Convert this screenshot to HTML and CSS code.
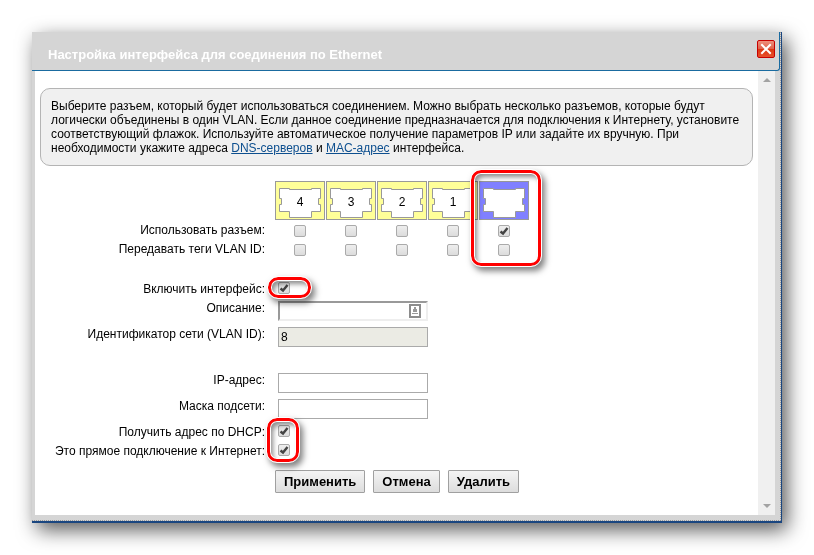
FILE: index.html
```html
<!DOCTYPE html>
<html lang="ru">
<head>
  <meta charset="UTF-8">
  <meta name="viewport" content="width=device-width, initial-scale=1.0">
  <title>Настройка интерфейса</title>
  <link rel="stylesheet" href="styles.css">
</head>
<body>
  <!-- port outline, shared by all sockets -->
  <svg class="defs" aria-hidden="true">
    <symbol id="socket" viewBox="0 0 50 39">
      <path d="M4.500 7.500H14.500V8.500H36.500V7.500H45.500V17.500H43.500V23.500H45.500V30.500H36.500V36.500H14.500V30.500H4.500V23.500H6.500V17.500H4.500Z" fill="#fff" stroke="#999"/>
    </symbol>
  </svg>

  <main class="dialog">
    <div class="frame">
      <header class="title-bar">
        <h1>Настройка интерфейса для соединения по Ethernet</h1>
        <button type="button" class="close" aria-label="Закрыть">
          <svg viewBox="0 0 16 16" width="16" height="16"><path d="M4 4L12 12M12 4L4 12" stroke="#fff" stroke-width="2" stroke-linecap="square"/></svg>
        </button>
      </header>

      <div class="body">
        <div class="content">
          <p class="info">Выберите разъем, который будет использоваться соединением. Можно выбрать несколько разъемов, которые будут логически объединены в один VLAN. Если данное соединение предназначается для подключения к Интернету, установите соответствующий флажок. Используйте автоматическое получение параметров IP или задайте их вручную. При необходимости укажите адреса <a href="#dns">DNS-серверов</a> и <a href="#mac">MAC-адрес</a> интерфейса.</p>

          <form>
            <div class="ports">
              <div class="port-labels">
                <span id="use-label">Использовать разъем:</span>
                <span id="tag-label">Передавать теги VLAN ID:</span>
              </div>
              <div class="port">
                <div class="socket"><svg><use href="#socket"/></svg><span>4</span></div>
                <input type="checkbox" aria-labelledby="use-label">
                <input type="checkbox" aria-labelledby="tag-label">
              </div>
              <div class="port">
                <div class="socket"><svg><use href="#socket"/></svg><span>3</span></div>
                <input type="checkbox" aria-labelledby="use-label">
                <input type="checkbox" aria-labelledby="tag-label">
              </div>
              <div class="port">
                <div class="socket"><svg><use href="#socket"/></svg><span>2</span></div>
                <input type="checkbox" aria-labelledby="use-label">
                <input type="checkbox" aria-labelledby="tag-label">
              </div>
              <div class="port">
                <div class="socket"><svg><use href="#socket"/></svg><span>1</span></div>
                <input type="checkbox" aria-labelledby="use-label">
                <input type="checkbox" aria-labelledby="tag-label">
              </div>
              <div class="port wan">
                <div class="socket"><svg><use href="#socket"/></svg></div>
                <input type="checkbox" aria-labelledby="use-label" checked>
                <input type="checkbox" aria-labelledby="tag-label">
                <i class="mark mark-port"></i>
              </div>
            </div>

            <div class="group">
              <div class="row check">
                <label for="enabled">Включить интерфейс:</label>
                <div class="control">
                  <input type="checkbox" id="enabled" checked>
                  <i class="mark mark-enabled"></i>
                </div>
              </div>
              <div class="row">
                <label for="descr">Описание:</label>
                <div class="control">
                  <input type="text" id="descr" class="descr">
                  <svg class="fill-icon" viewBox="0 0 12 14" width="12" height="14"><path d="M1 1H11V13H1Z" fill="#fff" stroke="#8c8c8c" stroke-width="2"/><path d="M5 3H7V5H8V8H4V5H5ZM3 9H9V10H3Z" fill="#999"/></svg>
                </div>
              </div>
              <div class="row">
                <label for="vlan">Идентификатор сети (VLAN ID):</label>
                <div class="control"><input type="text" id="vlan" class="locked" value="8" readonly></div>
              </div>
            </div>

            <div class="group">
              <div class="row">
                <label for="ip">IP-адрес:</label>
                <div class="control"><input type="text" id="ip"></div>
              </div>
              <div class="row">
                <label for="mask">Маска подсети:</label>
                <div class="control"><input type="text" id="mask"></div>
              </div>
              <div class="row check">
                <label for="dhcp">Получить адрес по DHCP:</label>
                <div class="control">
                  <input type="checkbox" id="dhcp" checked>
                  <i class="mark mark-dhcp"></i>
                </div>
              </div>
              <div class="row check">
                <label for="direct">Это прямое подключение к Интернет:</label>
                <div class="control"><input type="checkbox" id="direct" checked></div>
              </div>
            </div>

            <div class="buttons">
              <button type="submit">Применить</button>
              <button type="reset">Отмена</button>
              <button type="button">Удалить</button>
            </div>
          </form>
        </div>

        <div class="scrollbar" aria-hidden="true">
          <svg viewBox="0 0 8 4" width="8" height="4"><path d="M0 4L4 0L8 4Z" fill="#a3a3a3"/></svg>
          <svg viewBox="0 0 8 4" width="8" height="4"><path d="M0 0H8L4 4Z" fill="#a3a3a3"/></svg>
        </div>
      </div>
    </div>
  </main>
</body>
</html>
```

FILE: styles.css
```css
* {
  box-sizing: border-box;
}
body {
  margin: 0;
  padding: 32px;
  background: #fff;
  color: #000;
  font: 12px/14px "Liberation Sans", Arial, sans-serif;
}
.defs {
  position: absolute;
  width: 0;
  height: 0;
}

/* window */
.dialog {
  filter: drop-shadow(5px 7px 10px rgba(0, 0, 0, 0.65));
}
.frame {
  position: relative;
  background: #d5d5d5;
  border-right: 1px solid #1a4680;
  border-bottom: 2px solid #1a4680;
}
.title-bar {
  display: flex;
  justify-content: space-between;
  align-items: flex-start;
  height: 39px;
  margin-right: 1px;
  padding: 8px 4px 0 16px;
  border-right: 1px solid #1a6ba0;
  border-bottom: 1px solid #1a6ba0;
  border-bottom-right-radius: 3px;
}
.title-bar h1 {
  margin: 0;
  padding-top: 7px;
  color: #fff;
  font-size: 13px;
  line-height: 16px;
}
.close {
  width: 18px;
  height: 18px;
  padding: 0;
  border: 1px solid #c80000;
  border-radius: 2px;
  background: linear-gradient(#ee8f7c, #e0614a 50%, #dc3510 50%, #e8502c);
}
.close svg {
  display: block;
}
.body {
  display: flex;
  margin: 0 6px 6px 3px;
  background: #fff;
}
/* dotted inner edge of the window */
.frame::after {
  content: "";
  position: absolute;
  inset: 0;
  border-right: 1px dotted #999;
  border-bottom: 1px dotted #999;
  pointer-events: none;
}
.content {
  flex: 1;
  padding: 17px 5px 22px;
}
.scrollbar {
  display: flex;
  flex-direction: column;
  justify-content: space-between;
  align-items: center;
  width: 17px;
  padding: 7px 0;
  background: #f0f0f0;
}

.info {
  margin: 0 0 15px;
  padding: 10px;
  border: 1px solid #b4b4b4;
  border-radius: 10px;
  background: #f0f0f0;
}
.info a {
  color: #0d4f8f;
}

/* ports */
.ports {
  display: flex;
  gap: 1px;
}
.port-labels {
  display: flex;
  flex-direction: column;
  justify-content: flex-end;
  width: 225px;
  margin-right: 9px;
  text-align: right;
  line-height: 19px;
}
.port {
  position: relative;
  display: grid;
  grid-template-rows: 40px 19px 19px;
  justify-items: center;
  align-items: center;
  width: 50px;
}
.socket {
  display: grid;
  align-self: start;
  width: 50px;
  height: 39px;
  border: 1px solid #999;
  background: #ff9;
}
.socket svg,
.socket span {
  grid-area: 1 / 1;
}
.socket svg {
  width: 50px;
  height: 39px;
  margin: -1px;
}
.socket span {
  place-self: center;
  padding-top: 3px;
}
.wan .socket {
  background: #8080ff;
}

/* fields */
.group {
  margin-top: 20px;
}
.row {
  display: grid;
  grid-template-columns: 225px 1fr;
  column-gap: 13px;
  height: 26px;
  padding-top: 3px;
}
.row.check {
  height: 19px;
}
.row label {
  text-align: right;
  white-space: nowrap;
}
.control {
  position: relative;
  display: flex;
  align-items: flex-start;
}
input[type="text"] {
  width: 150px;
  height: 20px;
  padding: 1px 2px;
  border: 1px solid #aaa;
  background: #fff;
  font: inherit;
}
input.descr {
  border: 2px solid #eee;
  border-top-color: #999;
  border-left-color: #999;
}
input.locked {
  background: #ebebe4;
}
.fill-icon {
  position: absolute;
  top: 3px;
  left: 131px;
}
input[type="checkbox"] {
  appearance: none;
  width: 12px;
  height: 12px;
  margin: 0;
  border: 1px solid #aaa;
  border-radius: 2px;
  background: linear-gradient(#eee, #dcdcdc);
}
input[type="checkbox"]:checked {
  background: url("data:image/svg+xml,%3Csvg xmlns='http://www.w3.org/2000/svg' viewBox='0 0 10 10'%3E%3Cpath d='M1.500 5.500L4 7.500L8.500 2' fill='none' stroke='%23444' stroke-width='2.400'/%3E%3C/svg%3E") center / 10px no-repeat, linear-gradient(#eee, #dcdcdc);
}

.buttons {
  display: flex;
  gap: 8px;
  padding: 10px 0 0 235px;
}
.buttons button {
  height: 23px;
  padding: 0 8px;
  border: 1px solid #a0a0a0;
  border-radius: 1px;
  background: linear-gradient(#f4f4f4, #ddd);
  color: #000;
  font: bold 13px "Liberation Sans", Arial, sans-serif;
}

/* red highlight rings */
.mark {
  position: absolute;
  z-index: 1;
  border: 3px solid #f00;
  border-radius: 10px;
  outline: 1px solid #fff;
  box-shadow: 3px 4px 6px 1px rgba(0, 0, 0, 0.5), inset 0 0 0 1px #fff, inset 3px 4px 5px rgba(0, 0, 0, 0.45);
  pointer-events: none;
}
.mark-port {
  inset: -11px -12px -7px -8px;
}
.mark-enabled {
  top: -5px;
  left: -10px;
  width: 43px;
  height: 21px;
}
.mark-dhcp {
  top: -7px;
  left: -11px;
  width: 32px;
  height: 44px;
}
```
